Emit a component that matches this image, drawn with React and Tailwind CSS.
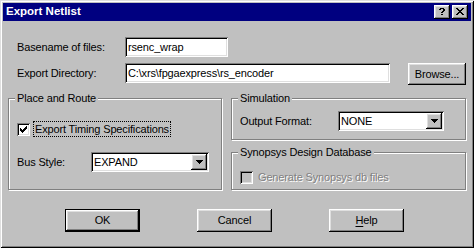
import React from "react";

const sunken =
  "shadow-[inset_1px_1px_0_#808080,inset_-1px_-1px_0_#fff,inset_2px_2px_0_#000,inset_-2px_-2px_0_#dfdfdf]";
const raised =
  "shadow-[inset_-1px_-1px_0_#000,inset_1px_1px_0_#fff,inset_-2px_-2px_0_#808080,inset_2px_2px_0_#dfdfdf]";

function PixelGlyph({ rows, color = "#000" }) {
  const w = rows[0].length;
  const h = rows.length;
  const rects = [];
  rows.forEach((r, y) =>
    r.split("").forEach((c, x) => {
      if (c === "x") rects.push(<rect key={`${x}-${y}`} x={x} y={y} width="1" height="1" fill={color} />);
    })
  );
  return (
    <svg width={w} height={h} viewBox={`0 0 ${w} ${h}`} shapeRendering="crispEdges" className="block">
      {rects}
    </svg>
  );
}

const CLOSE = ["xx....xx", ".xx..xx.", "..xxxx..", "...xx...", "..xxxx..", ".xx..xx.", "xx....xx"];
const HELP = [".xxxx.", "xx..xx", "....xx", "...xx.", "..xx..", "......", "..xx.."];
const CHECK = ["......x", ".....xx", "x...xxx", "xx.xxx.", "xxxxx..", ".xxx...", "..x...."];
const DOWN = ["xxxxxxx", ".xxxxx.", "..xxx..", "...x..."];

function CapBtn({ children }) {
  return (
    <div className={`flex h-[14px] w-[16px] items-center justify-center bg-[#c0c0c0] pb-[1px] pr-[1px] ${raised}`}>
      {children}
    </div>
  );
}

function Field({ className, children }) {
  return (
    <div className={`flex h-[20px] items-center bg-white pl-[3px] ${sunken} ${className}`}>
      <span className="whitespace-nowrap leading-none">{children}</span>
    </div>
  );
}

function Select({ className, value }) {
  return (
    <div className={`flex h-[20px] items-center bg-white p-[2px] pl-[3px] ${sunken} ${className}`}>
      <span className="flex-1 whitespace-nowrap leading-none">{value}</span>
      <div className={`flex h-[16px] w-[16px] items-center justify-center bg-[#c0c0c0] ${raised}`}>
        <PixelGlyph rows={DOWN} />
      </div>
    </div>
  );
}

function CheckBox({ checked, disabled }) {
  return (
    <div
      className={`flex h-[13px] w-[13px] shrink-0 items-center justify-center ${
        disabled ? "bg-[#c0c0c0]" : "bg-white"
      } ${sunken}`}
    >
      {checked && <PixelGlyph rows={CHECK} />}
    </div>
  );
}

function Group({ title, className, children }) {
  return (
    <div
      className={`flex flex-col border border-[#808080] shadow-[inset_1px_1px_0_#fff,1px_1px_0_#fff] ${className}`}
    >
      <span className="-mt-[7px] ml-[6px] self-start bg-[#c0c0c0] px-[2px] leading-[13px]">{title}</span>
      {children}
    </div>
  );
}

function Button({ children, isDefault }) {
  return (
    <div
      className={`flex h-[23px] w-[75px] items-center justify-center bg-[#c0c0c0] ${raised} ${
        isDefault ? "border border-black" : ""
      }`}
    >
      <span className="leading-none">{children}</span>
    </div>
  );
}

export default function App() {
  return (
    <div
      className={`flex h-[248px] w-[474px] flex-col bg-[#c0c0c0] p-[3px] font-['Liberation_Sans',Arial,sans-serif] text-[11px] tracking-[-0.15px] text-black shadow-[inset_1px_1px_0_#dfdfdf,inset_-1px_-1px_0_#000,inset_2px_2px_0_#fff,inset_-2px_-2px_0_#808080]`}
    >
      {/* Title bar */}
      <div className="flex h-[18px] items-center justify-between bg-[#000080] pl-[3px] pr-[3px]">
        <span className="text-[11.5px] font-bold leading-none tracking-normal text-white">Export Netlist</span>
        <div className="flex gap-[2px]">
          <CapBtn>
            <PixelGlyph rows={HELP} />
          </CapBtn>
          <CapBtn>
            <PixelGlyph rows={CLOSE} />
          </CapBtn>
        </div>
      </div>

      {/* Client */}
      <div className="flex flex-col pl-[5px]">
        <div className="mt-[16px] flex h-[20px] items-center pl-[9px]">
          <span className="w-[108px]">Basename of files:</span>
          <Field className="w-[103px]">rsenc_wrap</Field>
        </div>

        <div className="mt-[6px] flex items-start pl-[9px]">
          <span className="flex h-[20px] w-[108px] items-center">Export Directory:</span>
          <Field className="w-[265px]">C:\xrs\fpgaexpress\rs_encoder</Field>
          <div className={`ml-[18px] flex h-[22px] w-[58px] items-center justify-center bg-[#c0c0c0] ${raised}`}>
            <span className="leading-none">Browse...</span>
          </div>
        </div>

        <div className="mt-[13px] flex gap-[9px]">
          <Group title="Place and Route" className="h-[92px] w-[214px]">
            <div className="mt-[16px] flex h-[16px] items-center pl-[8px]">
              <CheckBox checked />
              <span className="ml-[3px] border border-dotted border-black px-[1px] leading-[14px]">
                Export Timing Specifications
              </span>
            </div>
            <div className="mt-[15px] flex items-center pl-[8px]">
              <span className="w-[74px]">Bus Style:</span>
              <Select className="w-[118px]" value="EXPAND" />
            </div>
          </Group>

          <div className="flex w-[235px] flex-col">
            <Group title="Simulation" className="h-[42px]">
              <div className="mt-[6px] flex items-center pl-[8px]">
                <span className="w-[98px]">Output Format:</span>
                <Select className="w-[106px]" value="NONE" />
              </div>
            </Group>
            <Group title="Synopsys Design Database" className="mt-[12px] h-[38px]">
              <div className="mt-[10px] flex h-[16px] items-center pl-[8px]">
                <CheckBox disabled />
                <span className="ml-[3px] border border-transparent px-[1px] leading-[14px] text-[#808080] [text-shadow:1px_1px_0_#fff]">
                  Generate Synopsys db files
                </span>
              </div>
            </Group>
          </div>
        </div>

        <div className="mt-[19px] flex gap-[57px] pl-[57px]">
          <Button isDefault>OK</Button>
          <Button>Cancel</Button>
          <Button>
            <span className="underline underline-offset-[2px]">H</span>elp
          </Button>
        </div>
      </div>
    </div>
  );
}
